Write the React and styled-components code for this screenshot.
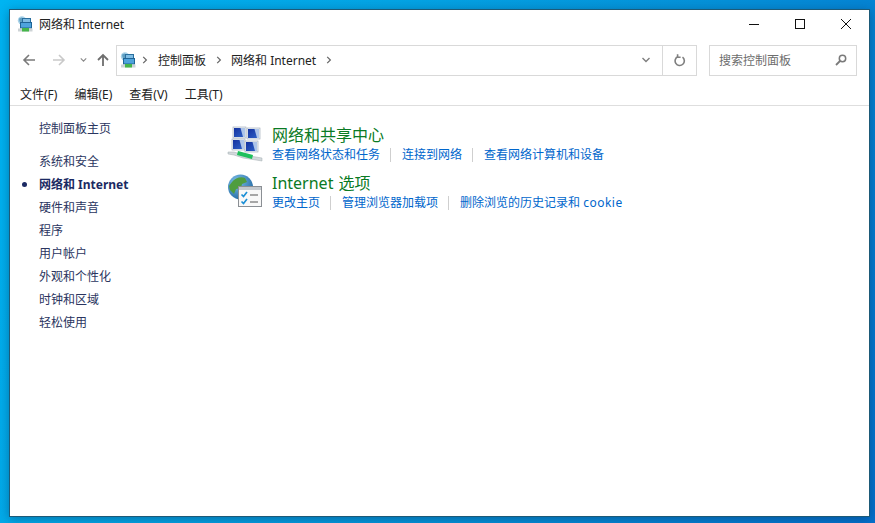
import React from 'react';
import styled, { createGlobalStyle } from 'styled-components';

const FONT = `"Noto Sans", "Noto Sans CJK SC", sans-serif`;

const Global = createGlobalStyle`
  html, body { margin: 0; padding: 0; height: 100%; }
  body { font-family: ${FONT}; font-size: 12px; overflow: hidden; }
  #root { height: 100%; }
`;

const Desktop = styled.div`
  width: 875px;
  height: 523px;
  box-sizing: border-box;
  padding: 9px 5px 6px 9px;
  background: linear-gradient(115deg, #00b4f2 0%, #04a4e4 35%, #0590d8 65%, #0570cc 100%);
`;

const Win = styled.div`
  width: 100%;
  height: 100%;
  box-sizing: border-box;
  display: flex;
  flex-direction: column;
  background: #fff;
  border: 1px solid #1d5a78;
  box-shadow: 0 2px 10px rgba(0, 40, 80, 0.4);
`;

const TitleBar = styled.div`
  height: 28px;
  display: flex;
  align-items: center;
  padding-left: 7px;
  flex: none;
`;

const TitleText = styled.span`
  margin-left: 6px;
  color: #222;
  font-size: 12px;
`;

const WinButtons = styled.div`
  margin-left: auto;
  display: flex;
  height: 28px;
`;

const WinButton = styled.div`
  width: 46px;
  height: 28px;
  display: flex;
  align-items: center;
  justify-content: center;
`;

const NavRow = styled.div`
  height: 32px;
  margin-top: 6px;
  display: flex;
  align-items: center;
  flex: none;
`;

const NavButtons = styled.div`
  width: 106px;
  display: flex;
  align-items: center;
  padding-left: 4px;
  box-sizing: border-box;
`;

const NavSlot = styled.div`
  width: ${p => p.$w}px;
  flex: none;
  display: flex;
  justify-content: center;
`;

const AddressBar = styled.div`
  width: 581px;
  height: 31px;
  box-sizing: border-box;
  border: 1px solid #d9d9d9;
  display: flex;
  align-items: center;
  padding-left: 3px;
`;

const Crumb = styled.span`
  display: flex;
  align-items: center;
  margin: ${p => (p.$first ? '0 10px 0 6px' : '0 9px 0 10px')};
`;

const CrumbText = styled.span`
  color: #222;
`;

const AddressEnd = styled.div`
  margin-left: auto;
  display: flex;
  align-items: center;
  height: 100%;
`;

const Drop = styled.div`
  width: 29px;
  box-sizing: border-box;
  padding-right: 3px;
  display: flex;
  justify-content: center;
`;

const Refresh = styled.div`
  width: 34px;
  height: 100%;
  box-sizing: border-box;
  border-left: 1px solid #d9d9d9;
  display: flex;
  align-items: center;
  justify-content: center;
`;

const Search = styled.div`
  width: 148px;
  height: 31px;
  margin-left: 12px;
  box-sizing: border-box;
  border: 1px solid #d9d9d9;
  display: flex;
  align-items: center;
  justify-content: space-between;
  padding: 0 9px 0 9px;
  color: #6d6d6d;
`;

const MenuBar = styled.div`
  height: 30px;
  flex: none;
  box-sizing: border-box;
  border-bottom: 1px solid #dedede;
  display: flex;
  align-items: center;
  padding: 6px 0 0 10px;
  gap: 17px;
  color: #222;
`;

const Main = styled.div`
  flex: 1;
  display: flex;
`;

const Side = styled.div`
  width: 217px;
  flex: none;
  padding-top: 11px;
  padding-left: 29px;
  box-sizing: border-box;
`;

const SideItem = styled.div`
  position: relative;
  height: 23px;
  line-height: 23px;
  white-space: nowrap;
  color: ${p => (p.$active ? '#1b2a63' : '#2a3560')};
  font-weight: ${p => (p.$active ? 700 : 400)};
  margin-bottom: ${p => (p.$gap ? '10px' : '0')};
  &::before {
    content: ${p => (p.$active ? '""' : 'none')};
    position: absolute;
    left: -17px;
    top: 9px;
    width: 5px;
    height: 5px;
    border-radius: 50%;
    background: #1b2a63;
  }
`;

const Content = styled.div`
  padding-top: 19px;
  display: flex;
  flex-direction: column;
  gap: 8px;
`;

const Group = styled.div`
  display: flex;
  height: 40px;
`;

const GroupIcon = styled.div`
  width: 45px;
  flex: none;
  padding-top: 1px;
`;

const GroupTitle = styled.div`
  color: #0a7a24;
  font-size: 16px;
  line-height: 21px;
  height: 20px;
  white-space: nowrap;
  word-spacing: 1px;
`;

const Links = styled.div`
  display: flex;
  align-items: center;
  height: 19px;
  white-space: nowrap;
`;

const TaskLink = styled.a`
  color: #0066cc;
  padding-right: 10px;
  margin-right: 11px;
  border-right: ${p => (p.$last ? 'none' : '1px solid #cfcfcf')};
  line-height: 14px;
`;

const LatinWord = styled.span`
  letter-spacing: 0.5px;
`;

const Globe = ({ size = 16 }) => (
  <svg width={size} height={size} viewBox="0 0 16 16">
    <circle cx="5" cy="4.5" r="4.2" fill="#a9d2e8" />
    <path d="M2 2.5l3-1 1.5 2-2 3-2-1z" fill="#5f9fc2" />
    <rect x="5.5" y="2.5" width="8" height="4" fill="#7fbde4" stroke="#2a6f9e" strokeWidth="1" />
    <rect x="3.5" y="6.5" width="11" height="5.5" fill="#4ea3dc" stroke="#1f6496" strokeWidth="1" />
    <rect x="1" y="12.5" width="14.5" height="3" fill="#cdd3d6" />
    <rect x="5" y="12" width="7" height="3.5" fill="#45b54a" />
  </svg>
);

const Monitor = ({ x, y }) => (
  <g transform={`translate(${x} ${y})`}>
    <rect x="0" y="0" width="13" height="11" fill="#eef2f7" stroke="#98a4b2" strokeWidth="0.6" />
    <rect x="1" y="1" width="11" height="9" fill="url(#screen)" />
    <path d="M7.5 1H12v9H10z" fill="#c5d9f2" opacity="0.85" />
  </g>
);

const NetworkIcon = () => (
  <svg width="37" height="36" viewBox="0 0 37 36">
    <defs>
      <linearGradient id="screen" x1="0" y1="0" x2="1" y2="1">
        <stop offset="0" stopColor="#1432a0" />
        <stop offset="1" stopColor="#2f62c8" />
      </linearGradient>
    </defs>
    <Monitor x="6" y="1" />
    <Monitor x="20" y="2" />
    <Monitor x="5" y="13" />
    <Monitor x="18" y="15" />
    <path d="M1 26l6 0 10 3 12 2 6 1v3l-6-1-13-2-9-3-6-1z" fill="#d3d9dc" stroke="#a2acb1" strokeWidth="0.5" />
    <path d="M11 25l15 4-1 4-15-4z" fill="#1fc05c" />
  </svg>
);

const OptionsIcon = () => (
  <svg width="37" height="34" viewBox="0 0 37 34">
    <defs>
      <radialGradient id="sea" cx="0.35" cy="0.3" r="0.8">
        <stop offset="0" stopColor="#7ec0e8" />
        <stop offset="1" stopColor="#1d64a0" />
      </radialGradient>
    </defs>
    <circle cx="13.5" cy="13" r="12.5" fill="url(#sea)" />
    <path d="M5 8c3-4 9-6 13-4l2 4-5 2-1 4-5 1-2 5-4-4-1-4z" fill="#4f9d3f" />
    <rect x="11.5" y="12.5" width="23" height="20" fill="#f8f8f8" stroke="#8b8f94" />
    <rect x="12" y="13" width="22" height="3" fill="#c4c9ce" />
    <path d="M14.5 20.5l2 2 3.5-4.5" fill="none" stroke="#1b8fd6" strokeWidth="1.7" />
    <path d="M14.5 27.5l2 2 3.5-4.5" fill="none" stroke="#1b8fd6" strokeWidth="1.7" />
    <path d="M23 21h8M23 28h8" stroke="#555" strokeWidth="1.2" />
  </svg>
);

const Arrow = ({ color, flip }) => (
  <svg width="14" height="14" viewBox="0 0 14 14" style={flip ? { transform: 'scaleX(-1)' } : undefined}>
    <path d="M13 7H2M7 2L2 7l5 5" fill="none" stroke={color} strokeWidth="1.6" />
  </svg>
);

const UpArrow = () => (
  <svg width="14" height="14" viewBox="0 0 14 14">
    <path d="M7 13V2M2 7l5-5 5 5" fill="none" stroke="#6e6e6e" strokeWidth="1.8" />
  </svg>
);

const Chevron = ({ w = 9, color = '#7f7f7f' }) => (
  <svg width={w} height="6" viewBox="0 0 9 6">
    <path d="M1 1l3.5 3.5L8 1" fill="none" stroke={color} strokeWidth="1.4" />
  </svg>
);

const CrumbArrow = () => (
  <svg width="6" height="8" viewBox="0 0 6 8">
    <path d="M1.2 0.8L4.4 4 1.2 7.2" fill="none" stroke="#666" strokeWidth="1.2" />
  </svg>
);

const sideItems = ['系统和安全', '网络和 Internet', '硬件和声音', '程序', '用户帐户', '外观和个性化', '时钟和区域', '轻松使用'];

export default function App() {
  return (
    <Desktop>
      <Global />
      <Win>
        <TitleBar>
          <Globe />
          <TitleText>网络和 Internet</TitleText>
          <WinButtons>
            <WinButton>
              <svg width="10" height="10" viewBox="0 0 10 10"><path d="M0 5.5h10" stroke="#111" /></svg>
            </WinButton>
            <WinButton>
              <svg width="10" height="10" viewBox="0 0 10 10"><rect x="0.5" y="0.5" width="9" height="9" fill="none" stroke="#111" /></svg>
            </WinButton>
            <WinButton>
              <svg width="10" height="10" viewBox="0 0 10 10"><path d="M0 0l10 10M10 0L0 10" stroke="#111" /></svg>
            </WinButton>
          </WinButtons>
        </TitleBar>
        <NavRow>
          <NavButtons>
            <NavSlot $w={30}><Arrow color="#7a7a7a" /></NavSlot>
            <NavSlot $w={30}><Arrow color="#c9c9c9" flip /></NavSlot>
            <NavSlot $w={18}><Chevron w={7} color="#8a8a8a" /></NavSlot>
            <NavSlot $w={22}><UpArrow /></NavSlot>
          </NavButtons>
          <AddressBar>
            <Globe />
            <Crumb $first><CrumbArrow /></Crumb>
            <CrumbText>控制面板</CrumbText>
            <Crumb><CrumbArrow /></Crumb>
            <CrumbText>网络和 Internet</CrumbText>
            <Crumb><CrumbArrow /></Crumb>
            <AddressEnd>
              <Drop><Chevron w={10} /></Drop>
              <Refresh>
                <svg width="12" height="13" viewBox="0 0 12 13">
                  <path d="M4 2.6A4.6 4.6 0 1 0 8.5 3.2M3.6 0.2v3h3" fill="none" stroke="#7f7f7f" strokeWidth="1.6" />
                </svg>
              </Refresh>
            </AddressEnd>
          </AddressBar>
          <Search>
            <span>搜索控制面板</span>
            <svg width="12" height="12" viewBox="0 0 12 12">
              <circle cx="7.5" cy="4.5" r="3.2" fill="none" stroke="#7a7a7a" strokeWidth="1.5" />
              <path d="M5 7L1 11" stroke="#7a7a7a" strokeWidth="1.8" />
            </svg>
          </Search>
        </NavRow>
        <MenuBar>
          <span>文件(F)</span>
          <span>编辑(E)</span>
          <span>查看(V)</span>
          <span>工具(T)</span>
        </MenuBar>
        <Main>
          <Side>
            <SideItem $gap>控制面板主页</SideItem>
            {sideItems.map((t, i) => (
              <SideItem key={t} $active={i === 1}>{t}</SideItem>
            ))}
          </Side>
          <Content>
            <Group>
              <GroupIcon><NetworkIcon /></GroupIcon>
              <div>
                <GroupTitle>网络和共享中心</GroupTitle>
                <Links>
                  <TaskLink>查看网络状态和任务</TaskLink>
                  <TaskLink>连接到网络</TaskLink>
                  <TaskLink $last>查看网络计算机和设备</TaskLink>
                </Links>
              </div>
            </Group>
            <Group>
              <GroupIcon><OptionsIcon /></GroupIcon>
              <div>
                <GroupTitle>Internet 选项</GroupTitle>
                <Links>
                  <TaskLink>更改主页</TaskLink>
                  <TaskLink>管理浏览器加载项</TaskLink>
                  <TaskLink $last>删除浏览的历史记录和 <LatinWord>cookie</LatinWord></TaskLink>
                </Links>
              </div>
            </Group>
          </Content>
        </Main>
      </Win>
    </Desktop>
  );
}
